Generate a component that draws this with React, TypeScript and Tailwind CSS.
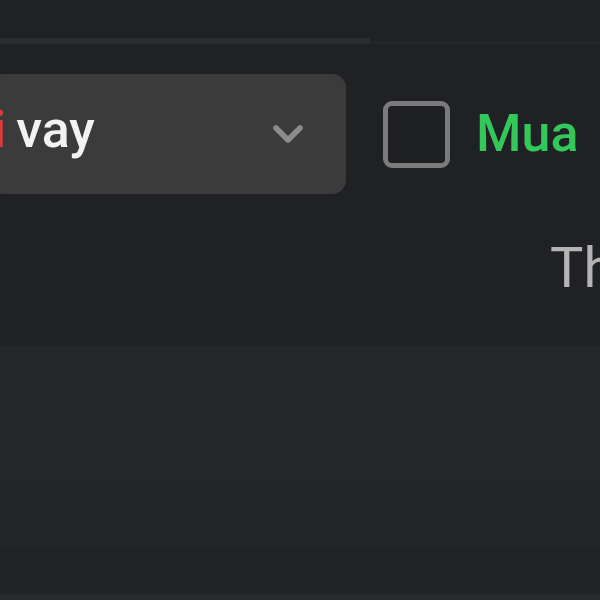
import { ChevronDown } from "lucide-react"

const App = () => {
  return (
    <div className="w-[600px] h-[600px] overflow-hidden bg-[#202124] flex flex-col" style={{ fontFamily: "Roboto, 'Noto Sans', sans-serif" }}>
      {/* top bar edge */}
      <div className="h-[38px] shrink-0"></div>
      <div className="flex shrink-0">
        <div className="w-[370px] h-[6px] bg-[#2b2c2e]"></div>
        <div className="flex-1 h-[3px] mt-[3px] bg-[#262729]"></div>
      </div>

      {/* filter row */}
      <div className="flex items-center mt-[30px] shrink-0">
        <div className="-ml-[10px] w-[356px] h-[120px] shrink-0 rounded-[14px] bg-[#3b3b3b] flex items-center justify-between pr-[34px] overflow-hidden">
          <div className="flex items-baseline text-[52px] leading-none pb-[8px] font-medium whitespace-nowrap">
            <span className="text-[#d83c3c] ml-[3px]">i</span>
            <span className="text-[#f2f2f2] ml-[10px]">vay</span>
          </div>
          <ChevronDown className="w-[48px] h-[48px] text-[#8c8c8c]" strokeWidth={2.8} />
        </div>
        <div className="ml-[37px] w-[67px] h-[67px] shrink-0 rounded-[9px] border-[5px] border-[#7b7b7b] bg-[#1f2023]"></div>
        <span className="ml-[26px] text-[52px] leading-none text-[#34c759] font-medium whitespace-nowrap">Mua</span>
      </div>

      {/* column header */}
      <div className="flex justify-end mt-[46px] shrink-0">
        <span className="text-[56px] leading-none text-[#b4b4b4] whitespace-nowrap -mr-[20px] w-[70px] overflow-hidden">Th</span>
      </div>

      {/* table rows */}
      <div className="mt-[50px] h-[135px] bg-[#252628] shrink-0"></div>
      <div className="h-[65px] bg-[#242527] shrink-0"></div>
      <div className="flex-1 bg-[#222325]"></div>
      <div className="h-[6px] bg-[#28292b] shrink-0"></div>
    </div>
  )
}

export default App
